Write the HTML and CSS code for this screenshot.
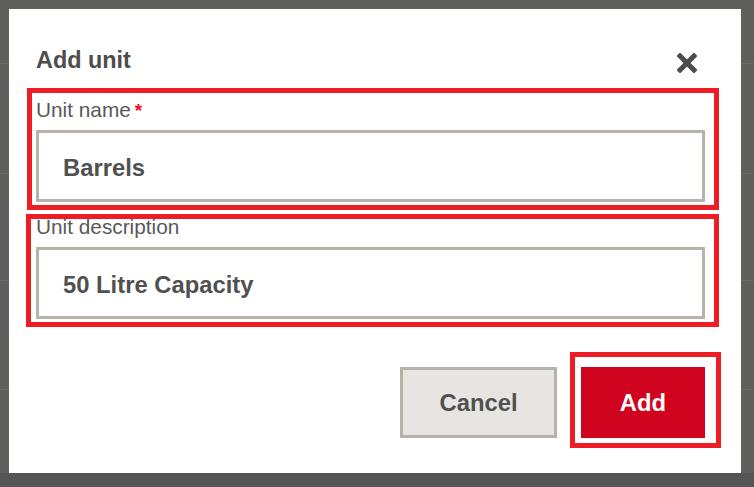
FILE: index.html
```html
<!DOCTYPE html>
<html lang="en">
<head>
<meta charset="utf-8">
<title>Add unit</title>
<link rel="stylesheet" href="styles.css">
</head>
<body>
<div class="dialog">
  <div class="dialog-head">
    <h2 class="dialog-title">Add unit</h2>
    <button class="close" aria-label="Close">
      <svg width="20" height="20" viewBox="0 0 20 20"><path d="M3 3 L17 17 M17 3 L3 17" stroke="#4b4b4b" stroke-width="5" stroke-linecap="square" fill="none"/></svg>
    </button>
  </div>
  <div class="field field-name">
    <label class="field-label">Unit name<span class="req">*</span></label>
    <input class="field-input" type="text" value="Barrels">
  </div>
  <div class="field field-desc">
    <label class="field-label">Unit description</label>
    <input class="field-input" type="text" value="50 Litre Capacity">
  </div>
  <div class="actions">
    <button class="btn btn-cancel">Cancel</button>
    <button class="btn btn-add">Add</button>
  </div>
</div>
</body>
</html>
```
FILE: styles.css
```css
html, body {
  margin: 0;
  padding: 0;
}
body {
  width: 754px;
  height: 487px;
  overflow: hidden;
  font-family: "Liberation Sans", Arial, sans-serif;
  background:
    linear-gradient(#6a6a6a, #6a6a6a) 0 63px / 100% 1px no-repeat,
    linear-gradient(#6a6a6a, #6a6a6a) 0 173px / 100% 1px no-repeat,
    linear-gradient(#6a6a6a, #6a6a6a) 0 280px / 100% 1px no-repeat,
    linear-gradient(#6a6a6a, #6a6a6a) 0 389px / 100% 1px no-repeat,
    linear-gradient(to bottom, #5f5f5e 0, #5f5f5e 473px, #555555 473px, #555555 100%);
}
.dialog {
  box-sizing: border-box;
  width: 732px;
  height: 464px;
  margin: 9px 0 0 9px;
  padding: 36px 36px 35px 27px;
  background: #ffffff;
}
.dialog-head {
  display: flex;
  align-items: center;
  justify-content: space-between;
  height: 28px;
}
.dialog-title {
  margin: 0;
  font-size: 23.4px;
  line-height: 28px;
  padding-top: 1px;
  font-weight: bold;
  color: #4d4d4d;
}
.close {
  display: block;
  width: 20px;
  height: 20px;
  margin: 8px 8px 0 0;
  padding: 0;
  border: 0;
  background: none;
}
.close svg { display: block; }
.field {
  position: relative;
}
.field::after {
  content: "";
  position: absolute;
  border: 5px solid #ee1c25;
  pointer-events: none;
}
.field-name { margin-top: 25px; }
.field-name::after { left: -9px; right: -14px; top: -10px; bottom: -8px; }
.field-desc { margin-top: 13px; }
.field-desc::after { left: -10px; right: -14px; top: -1px; bottom: -8px; }
.field-label {
  display: block;
  height: 24px;
  font-size: 20.8px;
  line-height: 24px;
  color: #595959;
}
.req {
  margin-left: 4px;
  color: #e8101a;
  font-weight: bold;
  font-size: 19px;
}
.field-input {
  display: block;
  box-sizing: border-box;
  width: 100%;
  height: 72px;
  margin-top: 8px;
  padding: 4px 24px 0;
  border: 3px solid #b8b3aa;
  border-radius: 0;
  outline: none;
  background: #ffffff;
  font-family: "Liberation Sans", Arial, sans-serif;
  font-size: 23.8px;
  font-weight: bold;
  color: #505050;
}
.actions {
  display: flex;
  justify-content: flex-end;
  gap: 24px;
  margin-top: 48px;
}
.btn {
  box-sizing: border-box;
  height: 71px;
  padding: 0;
  font-family: "Liberation Sans", Arial, sans-serif;
  font-size: 23.8px;
  font-weight: bold;
  border-radius: 0;
}
.btn-cancel {
  width: 157px;
  border: 3px solid #b8b3aa;
  background: #e6e5e2;
  color: #505050;
}
.btn-add {
  position: relative;
  width: 124px;
  border: 0;
  background: #d0041e;
  color: #ffffff;
}
.btn-add::after {
  content: "";
  position: absolute;
  left: -11px;
  right: -16px;
  top: -15px;
  bottom: -10px;
  border: 5px solid #ee1c25;
}
```
